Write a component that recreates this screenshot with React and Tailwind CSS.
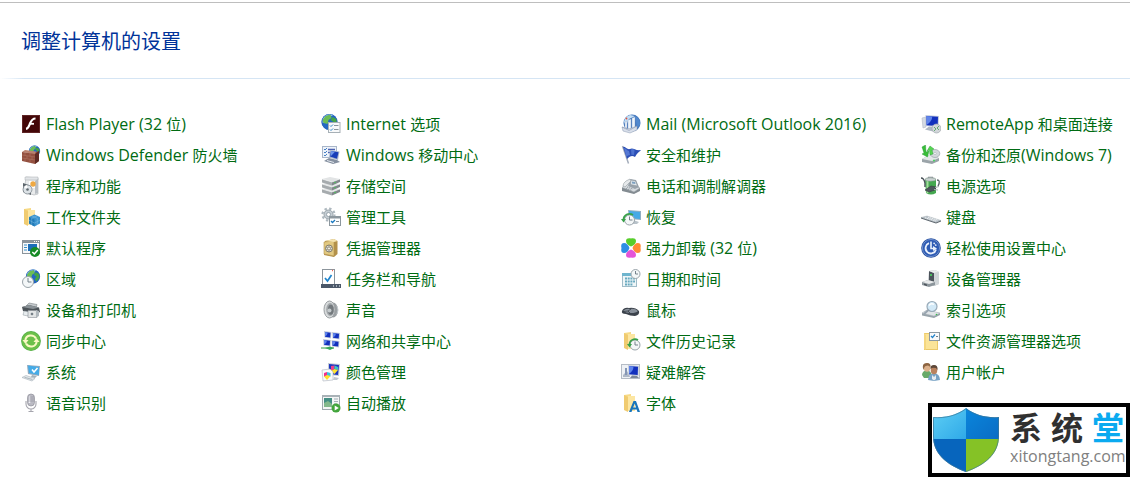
import React from 'react';

function Icon({ children }) {
  return (
    <svg viewBox="0 0 20 20" className="size-5 shrink-0" aria-hidden="true">
      {children}
    </svg>
  );
}

function Globe({ cx, cy, r }) {
  const k = r / 8;
  return (
    <g transform={`translate(${cx} ${cy}) scale(${k})`}>
      <circle r="8" fill="#2467c4" />
      <path d="M-7 -3A8 8 0 0 1 4 -7L0 -5L-2 -1L-7 1Z" fill="#a9d8f7" />
      <path d="M-4 -6L1 -7.500L2 -4L-1 -2L-2 2L-6 1L-7 -2Z" fill="#6cbd55" />
      <path d="M3 -5L7 -3L7.500 1L4 6L2 3L4 0L1 -2Z" fill="#45a546" />
      <circle r="7.600" fill="none" stroke="#2a62b4" strokeWidth=".6" />
    </g>
  );
}

function Folder({ x = 3 }) {
  return (
    <g transform={`translate(${x} 1)`}>
      <path d="M0 1L7 0V2H11V17H4L0 15Z" fill="#f7da85" />
      <path d="M4 2H11V17H4Z" fill="#fce6a2" />
      <path d="M0 1L4 3V18L0 16Z" fill="#f0cb70" />
    </g>
  );
}

function Clock({ cx, cy, r }) {
  return (
    <g>
      <circle cx={cx} cy={cy} r={r} fill="#f4f7f8" stroke="#9aa4aa" strokeWidth="1" />
      <path d={`M${cx} ${cy - r + 1.5}V${cy}H${cx + r - 2}`} fill="none" stroke="#66747f" strokeWidth=".9" />
    </g>
  );
}

function Screen({ x, y, w, h }) {
  return (
    <g>
      <path d={`M${x} ${y}L${x + w} ${y + 1}L${x + w - 0.5} ${y + h}L${x + 0.5} ${y + h - 1}Z`} fill="#c3cbdc" />
      <path d={`M${x + 1} ${y + 1}L${x + w - 1} ${y + 1.8}L${x + w - 1.3} ${y + h - 1}L${x + 1} ${y + h - 1.8}Z`} fill="#1230bd" />
      <path d={`M${x + 1} ${y + 1}L${x + w / 2} ${y + 1.4}Q${x + w / 2} ${y + h / 2} ${x + 1} ${y + h - 2}Z`} fill="#5f84ea" />
    </g>
  );
}

const icons = {
  flash: (
    <>
      <rect x="1" y="1" width="18" height="18" fill="#430708" />
      <rect x="1.500" y="1.500" width="17" height="17" fill="none" stroke="#5f2526" />
      <path d="M14.500 4.500C11 4.500 10 7 9 9.500S7.500 14.500 5 14.800" fill="none" stroke="#fff" strokeWidth="2.200" />
      <path d="M9 9.800H13" stroke="#fff" strokeWidth="1.800" />
    </>
  ),
  firewall: (
    <>
      <Globe cx={13.5} cy={6} r={5.5} />
      <path d="M1 7L12 8L18 6V16L14 19L1 16Z" fill="#93503f" />
      <path d="M14 9L18 6V16L14 19Z" fill="#5e2a23" />
      <path d="M1 7L4 5L15 6.500L14 9Z" fill="#b98270" />
      <path d="M1 10L14 12M1 13L14 15M4 7.500V10.500M9 8V11M6 11V13.500M11 12V14.500M4 13.500V16.500M9 14.500V18" stroke="#bb8576" strokeWidth=".4" />
    </>
  ),
  programs: (
    <>
      <path d="M5 1L17 2V18L13 19L3 16Z" fill="#e9ebec" stroke="#a9aeb2" strokeWidth=".6" />
      <path d="M4 1H17V4H4Z" fill="#e2e5e8" stroke="#a9aeb2" strokeWidth=".5" />
      <path d="M14 5L17 3V17L14 18Z" fill="#b8bec4" />
      <path d="M8 5H14V12H8Z" fill="#fff" />
      <circle cx="12" cy="8" r="2.700" fill="#efa943" />
      <path d="M2 7L10 10V19L2 16Z" fill="#5d666c" />
      <circle cx="6.500" cy="13.500" r="4.500" fill="#dce2e6" stroke="#727b82" strokeWidth=".7" />
      <path d="M6.500 13.500L3 11A5 5 0 0 1 6 9Z" fill="#fff" />
      <circle cx="6.500" cy="13.500" r="1.300" fill="#5e686e" />
    </>
  ),
  workFolders: (
    <>
      <Folder />
      <path d="M8 10L13.500 7.500L19 10V16.500L13.500 19.500L8 16.500Z" fill="#3b93cf" />
      <path d="M8 10L13.500 12.500V19.500L8 16.500Z" fill="#207ab8" />
      <path d="M8 13.200L13.500 16L19 13.200M10.700 8.800L16.300 11.200V18M16.300 8.800L10.700 11.200V18" fill="none" stroke="#7fbde3" strokeWidth=".5" />
    </>
  ),
  defaults: (
    <>
      <rect x="1.500" y="2.500" width="17" height="13" fill="#f7f8f9" stroke="#8b949b" />
      <path d="M1 2H19V5H1Z" fill="#8b949b" />
      <path d="M13 3.500H14M15 3.500H16M17 3.500H18" stroke="#fff" />
      <rect x="7" y="6" width="9" height="7" fill="#1b6eb9" />
      <path d="M3 7H6M3 9.500H6M3 12H6" stroke="#368dc7" />
      <circle cx="14" cy="14" r="5" fill="#168b25" />
      <path d="M11.300 14L13.300 16L16.800 12" fill="none" stroke="#fff" strokeWidth="1.500" />
    </>
  ),
  region: (
    <>
      <Globe cx={12} cy={7.5} r={7} />
      <Clock cx={7} cy={13} r={5.5} />
    </>
  ),
  printer: (
    <>
      <path d="M5 6L8 3L16 4.500L15 9H4Z" fill="#c5cacd" stroke="#7d8488" strokeWidth=".6" />
      <path d="M1 7L8 5L18 7.500L19 12L15 14L2 11Z" fill="#4d5459" />
      <path d="M1 7L8 5L18 7.500L12 9Z" fill="#8a9297" />
      <path d="M3 11L9 12L7 16L2 15Z" fill="#e8edef" stroke="#8c969c" strokeWidth=".5" />
      <path d="M7 10.500H16V17.500H7Z" fill="#e0e3e4" stroke="#8b9297" strokeWidth=".6" />
      <circle cx="11" cy="14" r="2" fill="#768087" stroke="#f4f6f6" />
      <path d="M15 10L18 11V16L15 17.500Z" fill="#b0b8bd" />
    </>
  ),
  sync: (
    <>
      <circle cx="10" cy="10" r="9.900" fill="#55ae47" />
      <circle cx="10" cy="10" r="9.200" fill="#6cc04a" />
      <path d="M4.300 9.500C5 3.500 12.500 3 15 7.500M15.700 10.500C15 16.500 7.500 17 5 12.500" fill="none" stroke="#fbf8c4" strokeWidth="2" />
      <path d="M1.500 9H7.500L4.500 13ZM12.500 11H18.500L15.500 7Z" fill="#fbf8c4" />
    </>
  ),
  system: (
    <>
      <path d="M6 3L19 4L18 14L7 12Z" fill="#92aabd" />
      <path d="M7 3.500L18 5V13L8 11Z" fill="#45abe7" />
      <path d="M11 7.500L13 10L16.500 6" fill="none" stroke="#fff" strokeWidth="1.500" />
      <path d="M11 13L16 14L14 16L10 15Z" fill="#a5b1b9" />
      <path d="M1 15.500L5 13.500L14 16.500L11 19Z" fill="#e6eaed" stroke="#a5b0b8" strokeWidth=".6" />
      <path d="M3.500 15.300L11.500 17.500" stroke="#9aa8b0" strokeWidth=".8" />
    </>
  ),
  speech: (
    <>
      <rect x="6.500" y="1" width="7" height="12" rx="3.500" fill="#babac3" stroke="#85858f" strokeWidth=".6" />
      <path d="M8.500 3V10" stroke="#efeff5" strokeWidth="1.500" />
      <path d="M7 4H13M7 6H13M7 8H13" stroke="#868691" strokeWidth=".5" />
      <path d="M5 8V11A5 5 0 0 0 15 11V8M10 16V18M7.500 18.500H12.500" fill="none" stroke="#a5a5ad" strokeWidth="1.100" />
    </>
  ),
  internet: (
    <>
      <Globe cx={8.5} cy={8} r={8} />
      <rect x="7.500" y="8.500" width="11.500" height="10" fill="#f8f9fa" stroke="#a7b0b6" />
      <path d="M9 11.500L10 12.500L12 10.500M9 15.500L10 16.500L12 14.500" fill="none" stroke="#3187c4" strokeWidth="1" />
      <path d="M13 11.500H17.500M13 15.500H17.500" stroke="#89949b" />
    </>
  ),
  mobility: (
    <>
      <rect x="1.500" y="1.500" width="14" height="11" fill="#eef3fa" stroke="#a9b6c9" />
      <path d="M3 4L4 5L6 3M3 7L4 8L6 6M3 10L4 11L6 9" fill="none" stroke="#4781c4" />
      <path d="M7 4.500H14M7 7.500H9" stroke="#4d62b0" strokeWidth="1.300" />
      <path d="M9 5L18.500 6.500L17 15L8 12.500Z" fill="#aab7cb" />
      <path d="M10 6L17.500 7.200L16 13.800L9 11.500Z" fill="#183eb8" />
      <path d="M10 6L14 6.700L9.500 11.500Z" fill="#6c96e9" />
      <path d="M8 13L16 15L19 17L12 19L3 16Z" fill="#8590a0" />
      <path d="M6 15.500L13 17.500" stroke="#e2e7ee" />
    </>
  ),
  storage: (
    <>
      {[11, 6, 1].map((y) => (
        <g key={y} transform={`translate(0 ${y})`}>
          <path d="M1 2L9 0L19 2L11 5Z" fill="#e2e4e5" />
          <path d="M1 2L11 5V8.500L1 5.500Z" fill="#a6abae" />
          <path d="M11 5L19 2V5L11 8.500Z" fill="#82888c" />
          <path d="M1 2L11 5L19 2" fill="none" stroke="#f9fafa" strokeWidth=".6" />
          <circle cx="14" cy="5.500" r=".7" fill="#3bd34a" />
        </g>
      ))}
    </>
  ),
  admin: (
    <>
      <circle cx="7.500" cy="7.500" r="4.500" fill="#c5cdd3" stroke="#9ba6ad" strokeWidth="1" />
      <circle cx="7.500" cy="7.500" r="6" fill="none" stroke="#aeb8bf" strokeWidth="2.200" strokeDasharray="2.350 2.350" />
      <circle cx="7.500" cy="7.500" r="2" fill="#fff" stroke="#819099" strokeWidth=".7" />
      <rect x="8.500" y="9.500" width="11" height="9" fill="#fff" stroke="#8c979e" />
      <path d="M8 10.500H20" stroke="#8c979e" strokeWidth="2" />
      <path d="M10 14L11.500 15.500L14 13" fill="none" stroke="#1678c0" strokeWidth="1.300" />
      <path d="M15 14.500H18" stroke="#7b878f" />
    </>
  ),
  credential: (
    <>
      <path d="M4 3L13 1L16.500 3V16L13 19L3 17Z" fill="#b3914a" />
      <path d="M3 4L13 3V18L3 16Z" fill="#e2c981" stroke="#b6944f" strokeWidth=".6" />
      <path d="M4 3L13 1L16.500 3L13 4Z" fill="#f4e3ae" />
      <circle cx="8" cy="10.500" r="3.500" fill="#dadbd5" stroke="#7c7560" strokeWidth=".9" />
      <path d="M8 7V14M5 9L11 12M5 12L11 9" stroke="#827b68" strokeWidth=".6" />
      <circle cx="8" cy="10.500" r="1.400" fill="#f7f5e8" stroke="#67614e" strokeWidth=".5" />
    </>
  ),
  taskbar: (
    <>
      <rect x="1.500" y=".5" width="12" height="16" fill="#fff" stroke="#8c959c" />
      <path d="M11 1.500H12" stroke="#ef6357" strokeWidth="1.500" />
      <path d="M4 9L6.500 12L10.500 6" fill="none" stroke="#2085cd" strokeWidth="1.700" />
      <rect y="15" width="20" height="4" fill="#4b5869" />
      <path d="M12 17H13M15 17H16M18 17H19" stroke="#b9c2cc" strokeWidth="1.300" />
    </>
  ),
  sound: (
    <>
      <ellipse cx="12" cy="10" rx="5" ry="7.500" fill="#9a9fa2" />
      <ellipse cx="8.500" cy="9.500" rx="5.500" ry="8.500" fill="#d8dbdc" stroke="#999ea1" strokeWidth="1" />
      <ellipse cx="9.200" cy="9.500" rx="4" ry="6.500" fill="#a2a7aa" />
      <ellipse cx="9.800" cy="9.800" rx="2.800" ry="5" fill="#73797d" />
      <circle cx="8.500" cy="10.500" r="2" fill="#c5cbcd" />
      <path d="M16 6Q18 10 16 14" fill="none" stroke="#c3cace" />
    </>
  ),
  network: (
    <>
      <Screen x={3} y={0} w={7.5} h={7.5} />
      <Screen x={11} y={1} w={8} h={7.5} />
      <Screen x={2} y={8} w={8} h={7.5} />
      <Screen x={10.5} y={9} w={8} h={7.5} />
      <path d="M0 17H13" stroke="#8bc898" strokeWidth="1.800" />
      <path d="M4 17L9 15.500L13 17L9 19Z" fill="#39a65a" />
    </>
  ),
  colour: (
    <>
      <path d="M7 1L19 2L18 14L7 13Z" fill="#c6ccd5" />
      <path d="M8 2L18 3L17 13L8 12Z" fill="#1c35c0" />
      <path d="M10 4L13.500 3.500V7L10 9Z" fill="#ed3f8c" />
      <path d="M13.500 3.500L17 5V8L13.500 7Z" fill="#38c9c2" />
      <path d="M10 9L13.500 7L17 8L13.500 12Z" fill="#ffe431" />
      <path d="M1 8L9 7L12 10V18L2 19Z" fill="#f9fafc" stroke="#b8bdc5" strokeWidth=".7" />
      <path d="M3 11L6 10V14L3 15Z" fill="#f2318d" />
      <path d="M6 10L9.500 11V14.500L6 14Z" fill="#35c3e1" />
      <path d="M3 14.500L6 13L9.500 14L6 18Z" fill="#ffdf2e" />
      <path d="M13 15L18 16L16 18H12Z" fill="#bfc6cf" />
    </>
  ),
  autoplay: (
    <>
      <rect x="1.500" y="2.500" width="17" height="14" fill="#f4f5f5" stroke="#9ea8ad" />
      <path d="M1 2H19V4H1Z" fill="#a9b2b7" />
      <rect x="3" y="5" width="8" height="9" fill="#438e83" />
      <path d="M3 10L7 8L11 11V14H3Z" fill="#83b88b" />
      <path d="M13 6H17M13 8.500H17M13 11H16" stroke="#a3b0b7" />
      <circle cx="15" cy="15" r="4.500" fill="#42a53b" />
      <path d="M13.700 12.500V17.500L17.800 15Z" fill="#fff" />
    </>
  ),
  mail: (
    <>
      <circle cx="11" cy="9" r="8.500" fill="#3f74bb" />
      <path d="M3 8A9 9 0 0 1 9 1L14 2L8 5L5 12Z" fill="#c3def5" />
      <path d="M14 2A9 9 0 0 1 19 11L16 14Z" fill="#5288cd" />
      <path d="M4 8L6 7V14H4ZM7 6L10 5V15H7ZM11 4L14 3V15H11Z" fill="#eff5fb" stroke="#8da4c5" strokeWidth=".4" />
      <circle cx="5.500" cy="4.500" r=".9" fill="#e0543c" />
      <path d="M1 13L8 15L16 12V16L9 19L2 17Z" fill="#d8dfea" stroke="#8896ae" strokeWidth=".5" />
      <path d="M1 13L8 16.500L16 12" fill="none" stroke="#8291aa" strokeWidth=".5" />
    </>
  ),
  security: (
    <>
      <path d="M1.500 1L7.500 18.500" stroke="#a3acba" strokeWidth="1.500" />
      <path d="M2 2C4 1 6 5 9 4C12 2 14 6 20 5C18 7 16 8 14 12C11 10 9 11 6 14Z" fill="#2c4fb6" />
      <path d="M3 3C5 3 6 6 8 6L9 10C7 10 6 11 5.500 12Z" fill="#5578d3" />
      <path d="M10 4.500Q12 3.500 13.500 5L13 10Q11 9.500 10.500 10Z" fill="#4d72d0" />
    </>
  ),
  phone: (
    <>
      <path d="M1 12L6 8L19 12V15L13 18L1 15Z" fill="#838b91" />
      <path d="M1 11.500L6 7L19 12L13 16Z" fill="#d5dade" stroke="#959da3" strokeWidth=".5" />
      <path d="M9 3L15 4L18 11L14 13L7 10Z" fill="#9aa3ab" />
      <path d="M10 4L14.500 5L16.500 10L9.500 8.500Z" fill="#e3e9ed" stroke="#828c94" strokeWidth=".5" />
      <path d="M11 5.500L14 6L14.500 8L11 7.500Z" fill="#7ea1c0" />
      <path d="M2 10Q2 7 5 5L9 3L10 5L6 9L4 11Z" fill="#e6e9eb" stroke="#959da3" strokeWidth=".6" />
      <path d="M6 11L12 13M5 12.500L11 14.500" stroke="#7b858d" strokeDasharray="1 1" strokeWidth=".8" />
    </>
  ),
  recovery: (
    <>
      <path d="M7 3L20 4V13L8 12Z" fill="#91aec3" />
      <path d="M8 4L19 5V12L9 11Z" fill="#46a9e6" />
      <path d="M12 13L18 15L16 17H10Z" fill="#b8c2c9" />
      <Clock cx={8.5} cy={13} r={5} />
      <path d="M2.500 13A6 6 0 0 1 12 8" fill="none" stroke="#38a149" strokeWidth="1.800" />
      <path d="M0 12H5L2.500 15.500Z" fill="#38a149" />
    </>
  ),
  uninstall: (
    <>
      <path d="M10 8.500C7 7.500 5 5.500 5 3C5 0 8 0 10 .5C12 0 15 0 15 3C15 5.500 13 7.500 10 8.500Z" fill="#57ce2b" />
      <path d="M11.500 10C12.500 7 14.500 5 17 5C20 5 20 8 19.500 10C20 12 20 15 17 15C14.500 15 12.500 13 11.500 10Z" fill="#ff8a33" />
      <path d="M10 11.500C13 12.500 15 14.500 15 17C15 20 12 20 10 19.500C8 20 5 20 5 17C5 14.500 7 12.500 10 11.500Z" fill="#e454d8" />
      <path d="M8.500 10C7.500 13 5.500 15 3 15C0 15 0 12 .5 10C0 8 0 5 3 5C5.500 5 7.500 7 8.500 10Z" fill="#2d8ee5" />
    </>
  ),
  datetime: (
    <>
      <rect x="1.500" y="4.500" width="14" height="13" fill="#eff6f8" stroke="#a0bcc8" />
      <path d="M1 4H16V7H1Z" fill="#6fb5ce" />
      <path d="M4 9.500H14M4 12.500H14M4 15.500H12" stroke="#68a9bf" strokeWidth="1.800" strokeDasharray="2 .7" />
      <Clock cx={14.5} cy={5} r={4.5} />
    </>
  ),
  mouse: (
    <>
      <path d="M1 11Q3 7 8 8Q14 7 18 11Q19 15 14 16Q9 16 5 14Q0 14 1 11Z" fill="#3b424b" />
      <path d="M2 11Q5 8 9 9Q14 8 17 11Q15 13 10 13Q5 13 2 11Z" fill="#88909a" />
      <path d="M2 11.500L7 11L10 9M7 11L9 13" fill="none" stroke="#333a43" strokeWidth=".8" />
    </>
  ),
  history: (
    <>
      <Folder />
      <Clock cx={14} cy={14} r={5} />
      <path d="M8.500 14A5.500 5.500 0 0 1 17 9" fill="none" stroke="#38a149" strokeWidth="1.700" />
      <path d="M6 13H11L8.500 16.500Z" fill="#38a149" />
    </>
  ),
  troubleshoot: (
    <>
      <rect x=".5" y="2.500" width="18" height="14" fill="#eef1f5" stroke="#b5bcc6" />
      <path d="M2 13L6 9L8 12L9 15H2Z" fill="#aeb8c7" />
      <Screen x={7} y={3} w={11} h={11} />
      <path d="M11 13.500L16 14L18 16H9Z" fill="#7b8799" />
      <path d="M4 6H6V13H4Z" fill="#8496b5" />
    </>
  ),
  fonts: (
    <>
      <Folder />
      <path d="M8 19L12.500 8H15L19 19H16.500L15.700 16.500H11.500L10.500 19ZM12.100 14.500H15L13.700 10.500Z" fill="#1976bc" fillRule="evenodd" />
    </>
  ),
  remote: (
    <>
      <path d="M1 4L5 3V13L2 14Z" fill="#d5dae3" stroke="#b1b8c4" strokeWidth=".6" />
      <Screen x={4.5} y={1} w={13.5} h={12} />
      <path d="M8 12.500L13 13V15L17 16L12 17.500L4 15.500Z" fill="#aeb7c3" />
      <circle cx="15.500" cy="14.500" r="4.500" fill="#d2d6da" stroke="#a2a9af" strokeWidth=".7" />
      <path d="M13 13L15 15L13 17M18 12L16 14L18 16" fill="none" stroke="#58a566" strokeWidth=".9" />
    </>
  ),
  backup: (
    <>
      <path d="M1 14L8 10L18 13V16L11 19L1 17Z" fill="#9ba4a9" />
      <path d="M1 14L8 10L18 13L11 16Z" fill="#e3e7e8" />
      <ellipse cx="14" cy="8.500" rx="4.800" ry="4" fill="#d2d7da" stroke="#9ca4aa" strokeWidth=".7" />
      <ellipse cx="14" cy="8.500" rx="1.300" ry="1" fill="#fff" stroke="#9ca4aa" strokeWidth=".5" />
      <path d="M1 2L4.500 0L5 7L8 6L6.500 12L1 9L3 8Z" fill="#39bd39" stroke="#1d962b" strokeWidth=".4" />
      <path d="M9 1L13 4L11 5L12 9L9 10L8.500 5L6 6Z" fill="#56d551" stroke="#1d962b" strokeWidth=".4" />
      <circle cx="13" cy="15.500" r=".9" fill="#38d951" />
    </>
  ),
  power: (
    <>
      <path d="M16 4Q20 4 17 10" fill="none" stroke="#596269" strokeWidth="1.300" />
      <path d="M7 3V1H12V3" fill="#adb6b9" stroke="#7c8689" strokeWidth=".5" />
      <path d="M4 3Q10 1 15 3V17Q10 20 5 17Z" fill="#45a850" />
      <path d="M6.500 4V17" stroke="#a3dd9c" strokeWidth="2" />
      <ellipse cx="9.500" cy="3.500" rx="5.500" ry="1.700" fill="#cbd3d3" stroke="#7b8984" strokeWidth=".5" />
      <path d="M0 2Q3 2 4 7L4 11" fill="none" stroke="#464f55" strokeWidth="1.400" />
      <path d="M4 14L10 10L15 11L14 14L8 16Z" fill="#4d565b" stroke="#3b4246" strokeWidth=".7" />
      <path d="M14 11.500L18 10.500M13 13.500L17 14" stroke="#aab1b3" />
    </>
  ),
  keyboard: (
    <>
      <path d="M0 10.500L6 9L20 13.500L15 15.500Z" fill="#b9c2c9" stroke="#a0a8ae" strokeWidth=".4" />
      <path d="M0 10.500L15 15.500L20 13.500V14.500L15 16.500L0 11.500Z" fill="#59626a" />
      <path d="M4 10.800L15 14M7 10.200L17 13.200" stroke="#f2f4f5" strokeWidth=".9" strokeDasharray="1.500 .6" />
    </>
  ),
  ease: (
    <>
      <circle cx="10" cy="10" r="9.800" fill="#27509f" />
      <circle cx="10" cy="10" r="8.600" fill="#2d5bb4" stroke="#7d9cd6" strokeWidth=".8" />
      <path d="M8 5.200A5.300 5.300 0 1 0 15 11.500" fill="none" stroke="#e9f0fb" strokeWidth="1.800" />
      <path d="M10 3.500V10.500H13" fill="none" stroke="#e9f0fb" strokeWidth="1.600" />
      <path d="M12.500 5Q14.500 6 15.300 8.200" fill="none" stroke="#e9f0fb" strokeWidth="1.600" strokeDasharray="1.500 .8" />
      <path d="M12 8L16 10.500L12 13Z" fill="#e9f0fb" />
    </>
  ),
  devices: (
    <>
      <path d="M8 2L14 1L18 3V15L13 17L7 14Z" fill="#b4babf" />
      <path d="M8 2L13 4V16L8 14Z" fill="#4b535b" />
      <path d="M13 4L18 3V15L13 17Z" fill="#d0d5d8" />
      <path d="M8 2L14 1L18 3L13 4Z" fill="#eceeef" />
      <circle cx="10" cy="6" r="1" fill="#4bde61" />
      <path d="M1 13L7 11L14 13V16L8 18L1 16Z" fill="#8c959b" />
      <path d="M1 13L7 11L14 13L8 15Z" fill="#e8eaeb" />
      <path d="M3 14.500L6 15.500V17L3 16Z" fill="#4d545b" />
    </>
  ),
  indexing: (
    <>
      <path d="M1 13L6 10L19 13V15L13 18L1 15.500Z" fill="#98a3aa" />
      <path d="M1 13L6 10L19 13L13 16Z" fill="#e0e4e7" stroke="#b2bac0" strokeWidth=".5" />
      <circle cx="11" cy="6.500" r="5" fill="#d2e9f7" stroke="#98aab8" strokeWidth="1.200" />
      <path d="M8 5.500Q10 2.500 13 4.500" fill="none" stroke="#fff" strokeWidth="1.500" />
      <path d="M7.500 10L3 14" stroke="#98a4af" strokeWidth="1.800" />
      <circle cx="15.500" cy="14.500" r=".8" fill="#37be4b" />
    </>
  ),
  explorer: (
    <>
      <path d="M3 2H9L10 4H17V19H3Z" fill="#ebc96a" />
      <path d="M4 3H16V18H4Z" fill="#fbe498" />
      <path d="M3 2L5 4V19L3 18Z" fill="#f5d780" />
      <rect x="8.500" y="1.500" width="10" height="8" fill="#f9fafb" stroke="#8c99a2" />
      <path d="M10 5L11.500 6.500L14 3.500" fill="none" stroke="#2383ca" strokeWidth="1.200" />
      <path d="M15 5.500H17" stroke="#6f7f8a" />
    </>
  ),
  users: (
    <>
      <path d="M1 13Q1 9 6 8Q11 9 11 16H3Z" fill="#68aa69" />
      <ellipse cx="6" cy="5.500" rx="3.300" ry="4.300" fill="#dcb18b" />
      <path d="M2.500 8Q0 1 6 1Q10 1 9.500 5L7 3.500Q4 3.500 3.500 5Z" fill="#8d6542" />
      <path d="M7 18Q7 12 13 11Q19 12 19 18L13 19Z" fill="#78a3c5" />
      <ellipse cx="13" cy="8" rx="3.300" ry="4.300" fill="#b9825e" />
      <path d="M9.500 7Q9 3 13 3Q17 3 16.500 8L15 6Q11 5 9.500 7Z" fill="#5c4738" />
      <path d="M11 13L13 15L15 13V17L13 18.500L11 17Z" fill="#e8edf1" />
    </>
  ),
};

const items = [
  ['flash', 'Flash Player (32 位)'],
  ['internet', 'Internet 选项'],
  ['mail', 'Mail (Microsoft Outlook 2016)'],
  ['remote', 'RemoteApp 和桌面连接'],
  ['firewall', 'Windows Defender 防火墙'],
  ['mobility', 'Windows 移动中心'],
  ['security', '安全和维护'],
  ['backup', '备份和还原(Windows 7)'],
  ['programs', '程序和功能'],
  ['storage', '存储空间'],
  ['phone', '电话和调制解调器'],
  ['power', '电源选项'],
  ['workFolders', '工作文件夹'],
  ['admin', '管理工具'],
  ['recovery', '恢复'],
  ['keyboard', '键盘'],
  ['defaults', '默认程序'],
  ['credential', '凭据管理器'],
  ['uninstall', '强力卸载 (32 位)'],
  ['ease', '轻松使用设置中心'],
  ['region', '区域'],
  ['taskbar', '任务栏和导航'],
  ['datetime', '日期和时间'],
  ['devices', '设备管理器'],
  ['printer', '设备和打印机'],
  ['sound', '声音'],
  ['mouse', '鼠标'],
  ['indexing', '索引选项'],
  ['sync', '同步中心'],
  ['network', '网络和共享中心'],
  ['history', '文件历史记录'],
  ['explorer', '文件资源管理器选项'],
  ['system', '系统'],
  ['colour', '颜色管理'],
  ['troubleshoot', '疑难解答'],
  ['users', '用户帐户'],
  ['speech', '语音识别'],
  ['autoplay', '自动播放'],
  ['fonts', '字体'],
];

// Latin runs are set one size larger than the Chinese characters beside them.
function Label({ text }) {
  return (
    <span>
      {text.split(/([\x20-\x7e]+)/).map((run, i) =>
        i % 2 === 1 ? (
          <span key={i} className="text-base leading-5">
            {run}
          </span>
        ) : (
          run
        )
      )}
    </span>
  );
}

function SiteBadge() {
  return (
    <div className="absolute right-0 bottom-0 flex items-center gap-2.5 border-4 border-black bg-white py-px pr-0.5">
      <svg viewBox="0 0 68 64" className="h-16 w-[68px] shrink-0" aria-hidden="true">
        <defs>
          <linearGradient id="shieldLight" x1="0" y1="0" x2="1" y2="1">
            <stop offset="0" stopColor="#5fd0f5" />
            <stop offset="1" stopColor="#2fa9e8" />
          </linearGradient>
          <linearGradient id="shieldDark" x1="0" y1="0" x2="1" y2="1">
            <stop offset="0" stopColor="#0a86dc" />
            <stop offset="1" stopColor="#0a6cc4" />
          </linearGradient>
          <clipPath id="shieldShape">
            <path d="M34 0C43 7 55 10 67 9V28C67 46 53 57 34 64C15 57 1 46 1 28V9C13 10 25 7 34 0Z" />
          </clipPath>
        </defs>
        <g clipPath="url(#shieldShape)">
          <path d="M0 0H34V31H0Z" fill="url(#shieldLight)" />
          <path d="M34 0H68V31H34Z" fill="url(#shieldDark)" />
          <path d="M0 31H34V64H0Z" fill="#0765bd" />
          <path d="M34 31H68V64H34Z" fill="#85c226" />
        </g>
        <path d="M34 0.700C43 7.500 55 10.500 66.500 9.500V28C66.500 46 53 57 34 63.500C15 57 1.500 46 1.500 28V9.500C13 10.500 25 7.500 34 0.700Z" fill="none" stroke="#3c7797" strokeWidth=".7" />
      </svg>
      <div className="flex w-[114px] flex-col">
        <div className="flex justify-between text-[32px] leading-8 font-bold text-[#303030]">
          <span>系</span>
          <span>统</span>
          <span className="text-[#0aaaf0]">堂</span>
        </div>
        <div className="text-base leading-6 whitespace-nowrap text-[#808080]">xitongtang.com</div>
      </div>
    </div>
  );
}

export default function App() {
  return (
    <main className="relative min-h-screen bg-white pt-[2px] font-['Open_Sans','Noto_Sans_CJK_SC',sans-serif]">
      <div className="h-px bg-[#bebebe]" />
      <h1 className="flex h-[75px] items-center px-[21px] pt-0.5 text-xl text-[#003399]">调整计算机的设置</h1>
      <div className="h-px bg-linear-to-r from-white to-[#d5e5f4] to-[24px]" />
      <ul className="mt-[29px] grid grid-cols-[300fr_300fr_300fr_209fr] pl-[21px]">
        {items.map(([icon, label]) => (
          <li key={icon} className="flex h-[31px] min-w-0 items-center">
            <a href="#" className="flex items-center gap-[5px] text-[15px] leading-5 whitespace-nowrap text-[#006b12] hover:underline">
              <Icon>{icons[icon]}</Icon>
              <Label text={label} />
            </a>
          </li>
        ))}
      </ul>
      <SiteBadge />
    </main>
  );
}
